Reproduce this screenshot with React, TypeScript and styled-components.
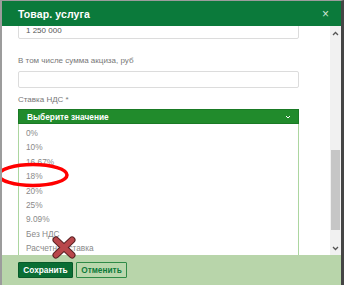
import React from "react";
import styled, { createGlobalStyle } from "styled-components";

const Global = createGlobalStyle`
  html, body { margin: 0; padding: 0; }
  body { font-family: "Liberation Sans", Arial, sans-serif; background: #555; }
`;

const Page = styled.div`
  position: relative;
  width: 344px;
  height: 285px;
  box-sizing: border-box;
  border-left: 2px solid #9c9c9c;
  border-top: 1px solid #9c9c9c;
  border-right: 3px solid #454545;
  overflow: hidden;
  display: flex;
  flex-direction: column;
`;

const Header = styled.div`
  height: 25px;
  flex: none;
  background: #0b7a3b;
  display: flex;
  align-items: center;
  justify-content: space-between;
  padding: 0 12px 0 16px;
  color: #fff;
`;

const Title = styled.div`
  font-weight: bold;
  font-size: 10.5px;
  letter-spacing: 0.1px;
`;

const Close = styled.div`
  font-size: 12px;
  color: #cfe6d6;
  line-height: 1;
`;

const BodyRow = styled.div`
  flex: 1;
  display: flex;
  background: #fff;
  overflow: hidden;
`;

const Content = styled.div`
  flex: 1;
  padding: 0 31px 0 16px;
  display: flex;
  flex-direction: column;
`;

const Input = styled.div<{ $top?: number }>`
  height: 17px;
  box-sizing: border-box;
  border: 1px solid #dcdcdc;
  border-radius: 2px;
  margin-top: ${(p) => p.$top ?? 0}px;
  font-size: 8px;
  color: #555;
  padding-left: 7px;
  display: flex;
  align-items: center;
`;

const Label = styled.div<{ $top: number }>`
  margin-top: ${(p) => p.$top}px;
  font-size: 8px;
  color: #777;
  height: 12px;
  line-height: 12px;
`;

const SelectWrap = styled.div`
  position: relative;
  margin-top: 3px;
`;

const SelectHead = styled.div`
  height: 15px;
  background: #218b2c;
  border: 1px solid #1a7a25;
  box-sizing: border-box;
  display: flex;
  align-items: center;
  justify-content: space-between;
  padding: 0 7px 0 8px;
  color: #fff;
  font-weight: bold;
  font-size: 8.3px;
`;

const Dropdown = styled.div`
  position: absolute;
  left: 0;
  right: 0;
  top: 15px;
  height: 136px;
  box-sizing: border-box;
  background: #fff;
  border: 1px solid #acd6a0;
  border-top: none;
  padding-top: 2px;
  z-index: 2;
`;

const Item = styled.div`
  height: 14.4px;
  line-height: 14.4px;
  font-size: 8.3px;
  color: #8a8a8a;
  padding-left: 7px;
`;

const Scrollbar = styled.div`
  width: 11px;
  flex: none;
  background: #f1f1f1;
  display: flex;
  flex-direction: column;
  align-items: center;
  padding: 5px 0 4px;
  box-sizing: border-box;
`;

const Thumb = styled.div`
  width: 9px;
  margin-top: 114px;
  height: 80px;
  background: #c6c6c6;
`;

const Spacer = styled.div`
  flex: 1;
`;

const Footer = styled.div`
  height: 30px;
  flex: none;
  background: #b8d5aa;
  display: flex;
  align-items: center;
  gap: 3px;
  padding: 0 0 0 16px;
`;

const Button = styled.div<{ $primary?: boolean }>`
  height: 16px;
  box-sizing: border-box;
  padding: 0 4px;
  display: flex;
  align-items: center;
  font-size: 8.3px;
  font-weight: bold;
  border-radius: 1px;
  background: ${(p) => (p.$primary ? "#0a6e34" : "#bad7ac")};
  color: ${(p) => (p.$primary ? "#fff" : "#0e7a3a")};
  border: 1px solid ${(p) => (p.$primary ? "#075a29" : "#2f8a47")};
  width: ${(p) => (p.$primary ? 55 : 51)}px;
  justify-content: center;
`;

const Overlay = styled.svg`
  position: absolute;
  left: -2px;
  top: -1px;
  pointer-events: none;
  z-index: 5;
`;

const Chevron = ({ up }: { up?: boolean }) => (
  <svg width="7" height="5" viewBox="0 0 7 5">
    <path
      d={up ? "M1 4 L3.5 1.5 L6 4" : "M1 1 L3.5 3.5 L6 1"}
      fill="none"
      stroke="#555"
      strokeWidth="1.3"
    />
  </svg>
);

const items = ["0%", "10%", "16.67%", "18%", "20%", "25%", "9.09%", "Без НДС", "Расчетная ставка"];

export default function App() {
  return (
    <>
      <Global />
      <Page>
        <Header>
          <Title>Товар. услуга</Title>
          <Close>×</Close>
        </Header>
        <BodyRow>
          <Content>
            <Input $top={-4}>1 250 000</Input>
            <Label $top={16}>В том числе сумма акциза, руб</Label>
            <Input $top={4} />
            <Label $top={6}>Ставка НДС *</Label>
            <SelectWrap>
              <SelectHead>
                <span>Выберите значение</span>
                <svg width="6" height="4" viewBox="0 0 6 4">
                  <path d="M1 1 L3 3 L5 1" fill="none" stroke="#fff" strokeWidth="1" />
                </svg>
              </SelectHead>
              <Dropdown>
                {items.map((t) => (
                  <Item key={t}>{t}</Item>
                ))}
              </Dropdown>
            </SelectWrap>
          </Content>
          <Scrollbar>
            <Chevron up />
            <Thumb />
            <Spacer />
            <Chevron />
          </Scrollbar>
        </BodyRow>
        <Footer>
          <Button $primary>Сохранить</Button>
          <Button>Отменить</Button>
        </Footer>
        <Overlay width="344" height="285" viewBox="0 0 344 285">
          <ellipse cx="33" cy="175" rx="34" ry="10.5" fill="none" stroke="#f00" strokeWidth="3.5" />
          <g stroke="#5a2224" strokeWidth="7" strokeLinecap="round">
            <line x1="56" y1="240" x2="72" y2="255" />
            <line x1="72" y1="240" x2="56" y2="255" />
          </g>
          <g stroke="#b9474b" strokeWidth="5" strokeLinecap="round">
            <line x1="56" y1="240" x2="72" y2="255" />
            <line x1="72" y1="240" x2="56" y2="255" />
          </g>
        </Overlay>
      </Page>
    </>
  );
}
